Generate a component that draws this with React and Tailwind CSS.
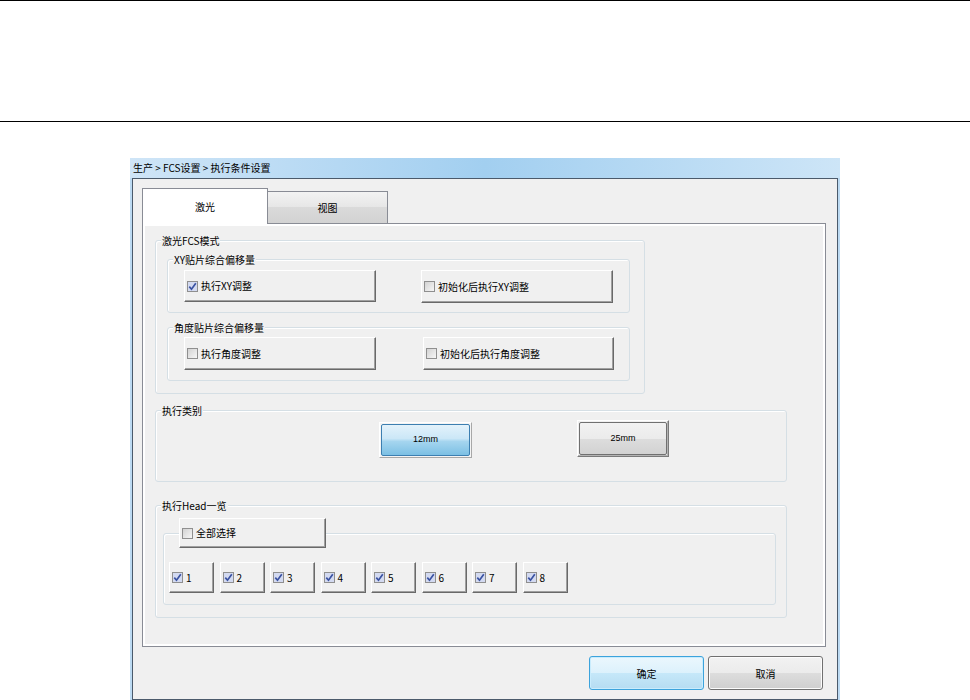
import React from "react";

function CheckBox({ checked }) {
  return (
    <span
      className={`w-[11px] h-[11px] shrink-0 border border-[#8f8f8f] flex items-center justify-center ${
        checked ? "bg-[#d3daf1]" : "bg-[linear-gradient(135deg,#d2d2d2,#f6f6f6)]"
      }`}
    >
      {checked && (
        <svg width="9" height="9" viewBox="0 0 9 9">
          <path d="M1.3 4.6 L3.5 7.2 L7.8 1.2" fill="none" stroke="#3a52a2" strokeWidth="1.7" />
        </svg>
      )}
    </span>
  );
}

// classic raised button with a checkbox inside
function CheckButton({ checked, label, className }) {
  return (
    <div
      className={`flex items-center gap-[3px] pl-[2px] bg-[#f0f0f0] border border-t-white border-l-white border-r-[#696969] border-b-[#696969] shadow-[inset_-1px_-1px_0_#a0a0a0] ${className}`}
    >
      <CheckBox checked={checked} />
      <span className="leading-none">{label}</span>
    </div>
  );
}

function Group({ label, className, children }) {
  return (
    <div className={`border border-[#d5dfe5] rounded-[3px] shadow-[inset_1px_1px_0_#fff] ${className}`}>
      <div className="-mt-[7px] ml-[5px] w-fit px-[1px] bg-[#f0f0f0] leading-[13px]">{label}</div>
      {children}
    </div>
  );
}

export default function App() {
  const heads = ["1", "2", "3", "4", "5", "6", "7", "8"];

  return (
    <div className="w-[970px] h-[700px] bg-white overflow-hidden text-[10px] text-black font-['Noto_Sans_CJK_SC','Noto_Sans',sans-serif]">
      {/* header strip */}
      <div className="h-[122px] border-y border-black" />

      {/* dialog window */}
      <div className="mt-[36px] ml-[130px] w-[710px] h-[542px] flex flex-col bg-[#bcdaf2]">
        <div className="h-[20px] flex items-center pl-[3px] leading-none bg-linear-to-r from-[#cfe5f7] via-[#a2cff0] to-[#cde5f7]">
          生产 &gt; FCS设置 &gt; 执行条件设置
        </div>

        <div className="flex-1 flex flex-col mx-[2px] border border-[#4b5a6b] bg-[#f0f0f0] pt-[9px] pl-[9px] pr-[11px]">
          {/* tabs */}
          <div className="h-[35px] flex items-end">
            <div className="relative z-10 -mb-px w-[126px] h-[36px] flex items-center justify-center bg-white border border-b-0 border-[#898c95]">
              激光
            </div>
            <div className="w-[120px] h-[32px] flex items-center justify-center border border-l-0 border-b-0 border-[#898c95] bg-[linear-gradient(#f3f3f3,#e6e6e6_50%,#dadada_50%,#d2d2d2)]">
              视图
            </div>
          </div>

          {/* panel */}
          <div className="w-[684px] h-[424px] border border-[#898c95] bg-white p-[2px]">
            <div className="h-full bg-[#f0f0f0] pl-[10px] pt-[14px]">
              {/* 激光FCS模式 */}
              <Group label="激光FCS模式" className="w-[490px] h-[154px]">
                <Group label="XY贴片综合偏移量" className="mt-[12px] ml-[11px] w-[463px] h-[54px]">
                  <div className="mt-[4px] pl-[16px] flex items-start">
                    <CheckButton checked label="执行XY调整" className="w-[192px] h-[32px]" />
                    <CheckButton label="初始化后执行XY调整" className="ml-[45px] w-[192px] h-[33px]" />
                  </div>
                </Group>
                <Group label="角度贴片综合偏移量" className="mt-[14px] ml-[11px] w-[463px] h-[54px]">
                  <div className="mt-[3px] pl-[16px] flex items-start">
                    <CheckButton label="执行角度调整" className="w-[192px] h-[33px]" />
                    <CheckButton label="初始化后执行角度调整" className="ml-[47px] w-[191px] h-[33px]" />
                  </div>
                </Group>
              </Group>

              {/* 执行类别 */}
              <Group label="执行类别" className="mt-[16px] w-[632px] h-[72px]">
                <div className="mt-[3px] flex items-start">
                  <div className="mt-[2px] ml-[223px] w-[93px] h-[36px] p-px border border-t-white border-l-white border-r-[#a8a8a8] border-b-[#a8a8a8] bg-[#f4f4f4]">
                    <div className="h-full flex items-center justify-center rounded-[2px] border border-[#3c7fb1] bg-[linear-gradient(#e3f2fb,#cbe7f7_45%,#a5d5ef_55%,#7cc0e4)] font-['Liberation_Sans',sans-serif] text-[9px]">
                      12mm
                    </div>
                  </div>
                  <div className="ml-[105px] w-[92px] h-[37px] p-px border border-t-white border-l-white border-r-[#7a7a7a] border-b-[#7a7a7a] shadow-[inset_-1px_-1px_0_#b4b4b4] bg-[#f0f0f0]">
                    <div className="h-full flex items-center justify-center rounded-[2px] border border-[#707070] bg-[linear-gradient(#f2f2f2,#ebebeb_50%,#dddddd_50%,#d2d2d2)] font-['Liberation_Sans',sans-serif] text-[9px]">
                      25mm
                    </div>
                  </div>
                </div>
              </Group>

              {/* 执行Head一览 */}
              <Group label="执行Head一览" className="mt-[23px] w-[632px] h-[113px]">
                <div className="mt-[21px] ml-[7px] w-[613px] h-[72px] border border-[#d5dfe5] rounded-[3px] shadow-[inset_1px_1px_0_#fff]">
                  <CheckButton label="全部选择" className="-mt-[16px] ml-[15px] w-[147px] h-[30px]" />
                  <div className="mt-[14px] pl-[5px] flex gap-[5.5px]">
                    {heads.map((h) => (
                      <CheckButton key={h} checked label={h} className="w-[45px] h-[31px]" />
                    ))}
                  </div>
                </div>
              </Group>
            </div>
          </div>

          {/* dialog buttons */}
          <div className="mt-[9px] pr-[3px] flex justify-end gap-[4px]">
            <div className="w-[115px] h-[34px] flex items-center justify-center rounded-[3px] border border-[#3ca3dc] shadow-[inset_0_0_0_1px_#c9ecfd] bg-[linear-gradient(#ebf7fd,#dcf1fc_50%,#c6e8f9_50%,#b5dcf2)]">
              确定
            </div>
            <div className="w-[115px] h-[34px] flex items-center justify-center rounded-[3px] border border-[#707070] shadow-[inset_0_0_0_1px_#fcfcfc] bg-[linear-gradient(#f2f2f2,#ebebeb_50%,#dddddd_50%,#cfcfcf)]">
              取消
            </div>
          </div>
        </div>
      </div>
    </div>
  );
}
